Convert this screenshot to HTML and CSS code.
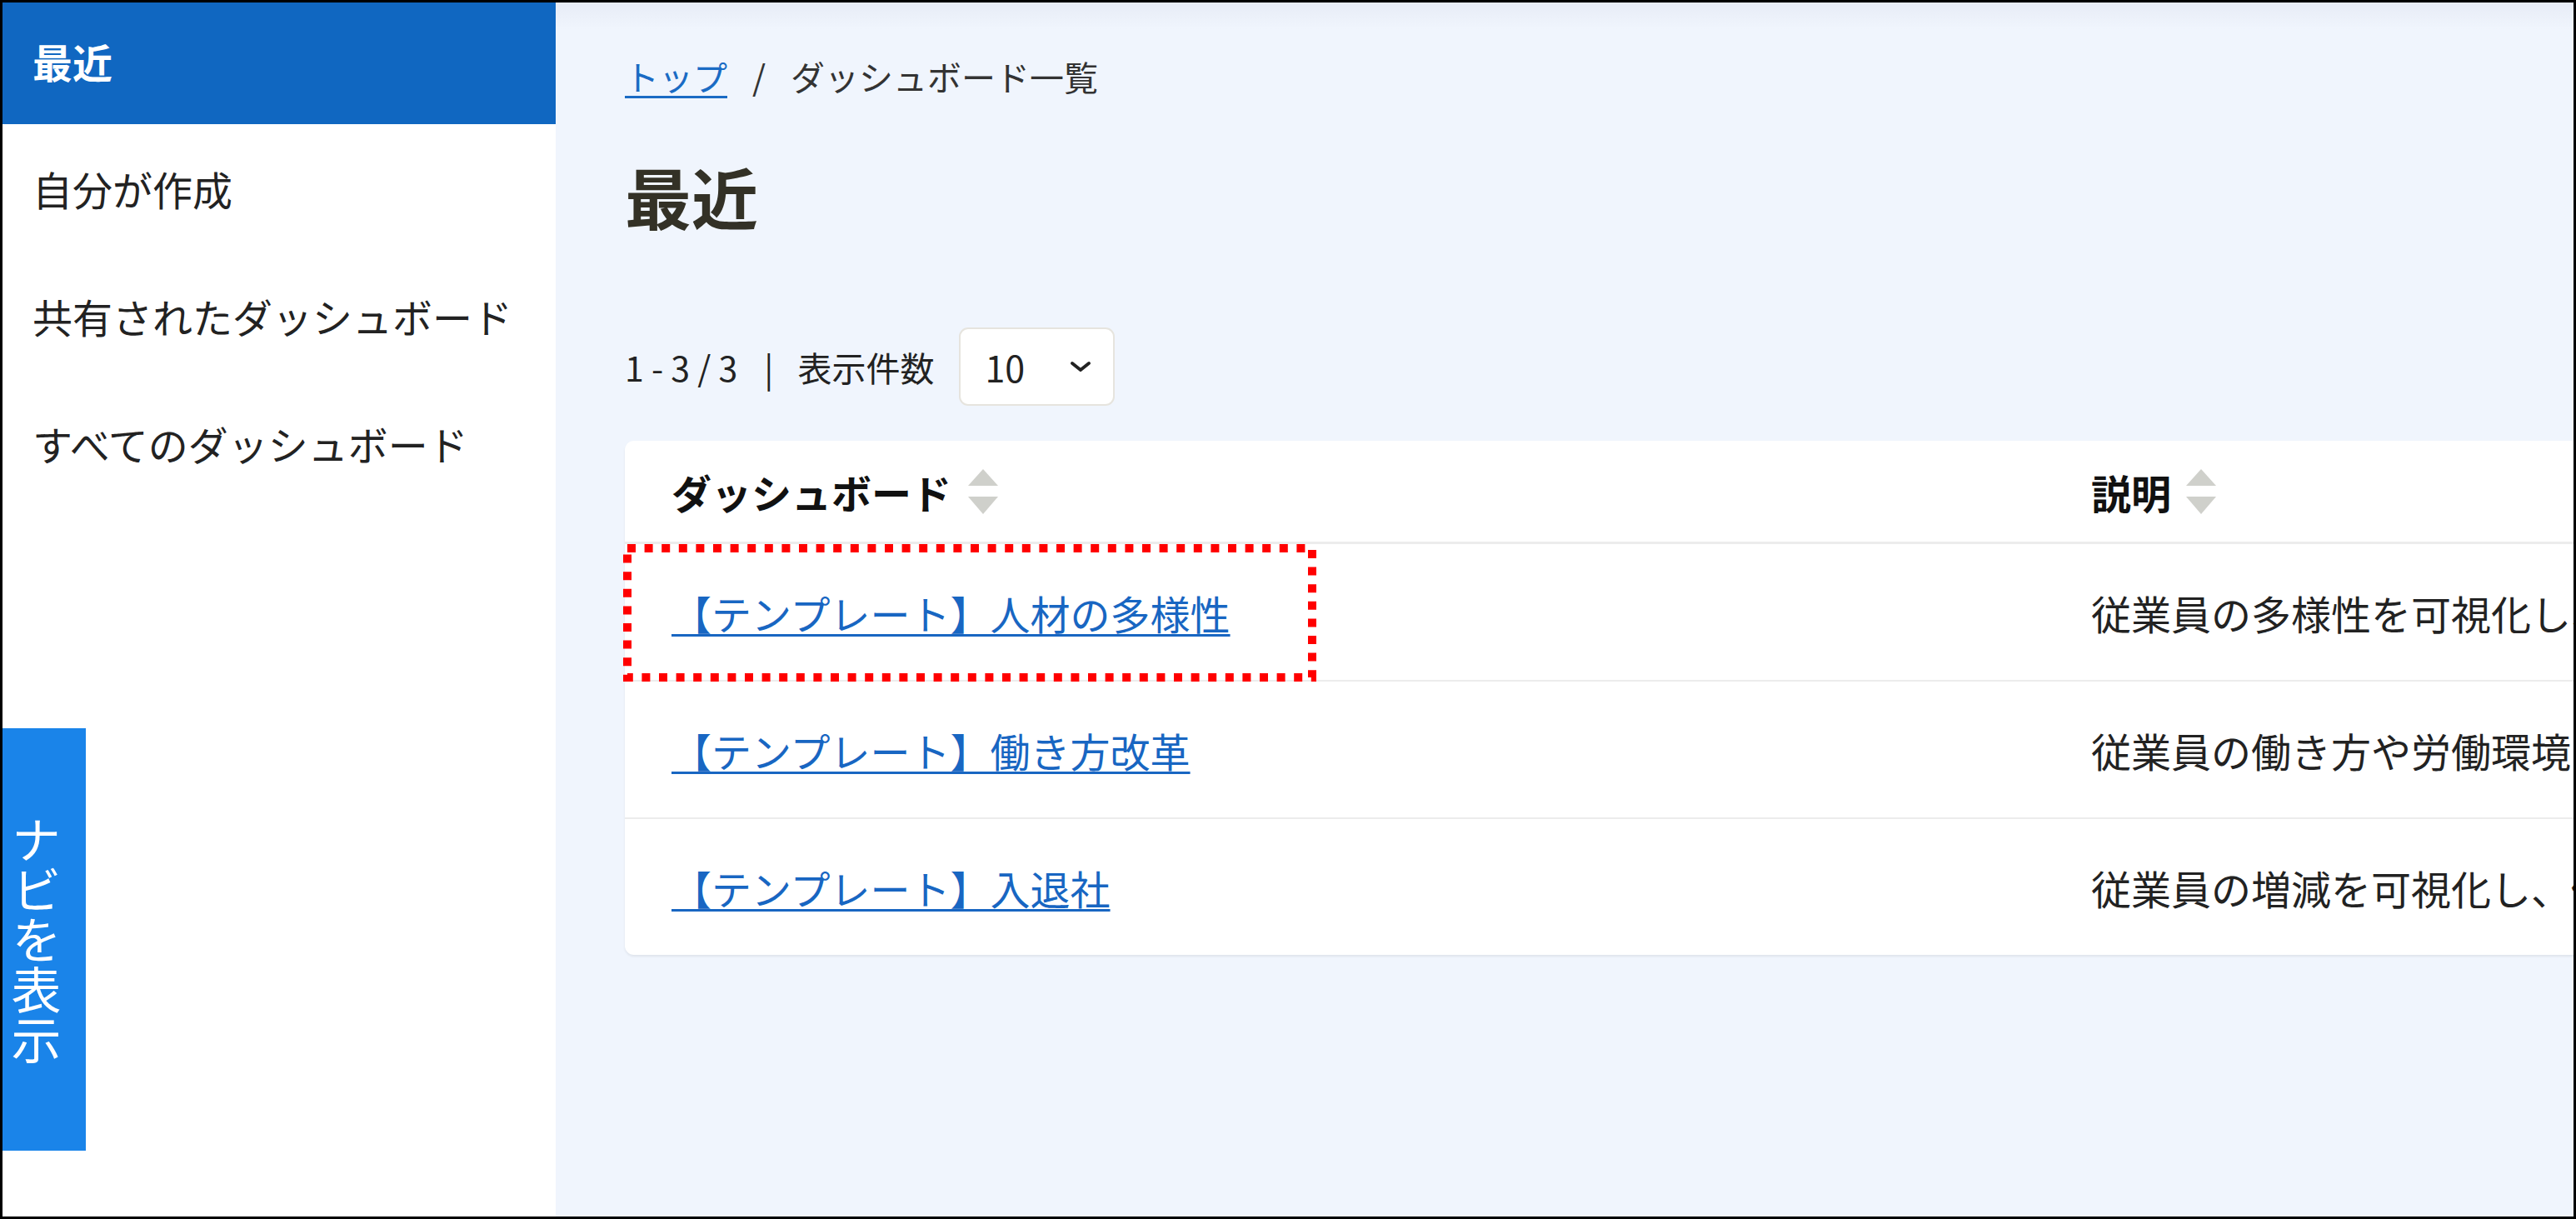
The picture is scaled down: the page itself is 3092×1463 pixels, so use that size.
FILE: index.html
```html
<!DOCTYPE html>
<html lang="ja">
<head>
<meta charset="utf-8">
<title>ダッシュボード一覧</title>
<link rel="stylesheet" href="styles.css">
</head>
<body>
<div class="frame">
  <aside class="sidebar">
    <ul class="nav">
      <li class="nav-item active">最近</li>
      <li class="nav-item">自分が作成</li>
      <li class="nav-item">共有されたダッシュボード</li>
      <li class="nav-item">すべてのダッシュボード</li>
    </ul>
  </aside>
  <button class="navi-toggle" type="button"><span class="navi-label">ナビを表示</span></button>
  <main class="main">
    <nav class="crumbs">
      <a class="crumb-link" href="#">トップ</a><span class="crumb-sep">/</span><span class="crumb-current">ダッシュボード一覧</span>
    </nav>
    <h1 class="title">最近</h1>
    <div class="count-row">
      <span class="count">1 - 3 / 3</span>
      <span class="count-sep">|</span>
      <span class="count-label">表示件数</span>
      <div class="select">
        <span class="select-value">10</span>
        <svg class="chevron" width="26" height="14" viewBox="0 0 26 14"><polyline points="3,3 13,11 23,3" fill="none" stroke="#222" stroke-width="4" stroke-linecap="round" stroke-linejoin="round"/></svg>
      </div>
    </div>
    <section class="card">
      <div class="row head">
        <div class="cell">ダッシュボード<svg class="sort" width="36" height="54" viewBox="0 0 36 54"><polygon points="18,0 36,20 0,20" fill="#cfd0cb"/><polygon points="0,33 36,33 18,54" fill="#cfd0cb"/></svg></div>
        <div class="cell">説明<svg class="sort" width="36" height="54" viewBox="0 0 36 54"><polygon points="18,0 36,20 0,20" fill="#cfd0cb"/><polygon points="0,33 36,33 18,54" fill="#cfd0cb"/></svg></div>
      </div>
      <div class="row">
        <div class="cell marked">
          <a class="dash-link" href="#">【テンプレート】人材の多様性</a>
          <svg class="mark" width="832" height="165" viewBox="0 0 832 165"><rect x="5" y="5" width="822" height="155" fill="none" stroke="#ff0000" stroke-width="10" stroke-dasharray="10 10.6"/></svg>
        </div>
        <div class="cell desc">従業員の多様性を可視化し、人材戦略の検討に活用します。</div>
      </div>
      <div class="row">
        <div class="cell"><a class="dash-link" href="#">【テンプレート】働き方改革</a></div>
        <div class="cell desc">従業員の働き方や労働環境を可視化し、改善に活用します。</div>
      </div>
      <div class="row">
        <div class="cell"><a class="dash-link" href="#">【テンプレート】入退社</a></div>
        <div class="cell desc">従業員の増減を可視化し、傾向を把握します。</div>
      </div>
    </section>
  </main>
</div>
</body>
</html>
```
FILE: styles.css
```css
* { box-sizing: border-box; }
html, body { margin: 0; padding: 0; height: 100%; }
body {
  font-family: "Noto Sans CJK JP", "Noto Sans", sans-serif;
  color: #222;
  background: #fff;
  overflow: hidden;
}
.frame {
  position: relative;
  width: 100vw;
  height: 100vh;
  border: 3px solid #000;
  display: flex;
  overflow: hidden;
}
.sidebar {
  width: 664px;
  flex: none;
  background: #fff;
}
.nav {
  list-style: none;
  margin: -7px 0 0 0;
  padding: 0;
}
.nav-item {
  height: 153px;
  display: flex;
  align-items: center;
  padding-left: 36px;
  font-size: 48px;
  line-height: 1;
  color: #222;
}
.nav-item.active {
  background: #1067c1;
  color: #fff;
  font-weight: 700;
}
.navi-toggle {
  position: absolute;
  left: 0;
  top: 871px;
  width: 100px;
  height: 507px;
  margin: 0;
  padding: 0 0 0 10px;
  border: none;
  background: #1a84e9;
  display: flex;
  align-items: center;
  justify-content: flex-start;
  font-family: inherit;
}
.navi-label {
  writing-mode: vertical-rl;
  font-size: 60px;
  line-height: 1;
  color: #fff;
  font-weight: 400;
}
.main {
  flex: 1;
  min-width: 0;
  overflow: hidden;
  background: linear-gradient(to bottom, #e7ecf6 0, #f0f5fd 32px);
  padding: 58px 0 0 83px;
}
.crumbs {
  height: 60px;
  display: flex;
  align-items: center;
  font-size: 41px;
  line-height: 1;
  color: #333;
}
.crumb-link {
  color: #1a6bc4;
  text-decoration: underline;
  text-decoration-thickness: 3px;
  text-underline-offset: 6px;
}
.crumb-sep { margin: 0 30px; }
.title {
  margin: 63px 0 0 0;
  height: 100px;
  font-size: 80px;
  line-height: 100px;
  font-weight: 700;
  color: #333126;
}
.count-row {
  margin-top: 109px;
  height: 94px;
  display: flex;
  align-items: center;
  font-size: 41px;
  line-height: 1;
  color: #222;
}
.count-sep { margin: 0 29px 0 32px; }
.select {
  margin-left: 30px;
  width: 187px;
  height: 94px;
  border: 2px solid #e6e4de;
  border-radius: 11px;
  background: #fff;
  display: flex;
  align-items: center;
  padding-left: 29px;
}
.select-value { font-size: 43px; }
.chevron { margin-left: 54px; }
.card {
  margin-top: 42px;
  width: 2700px;
  background: #fff;
  border-radius: 11px;
  box-shadow: 0 2px 3px rgba(0, 0, 0, 0.07);
}
.row {
  display: grid;
  grid-template-columns: 1760px 1fr;
  height: 165px;
  border-bottom: 2px solid #ececec;
}
.row:last-child { border-bottom: none; height: 163px; }
.row.head {
  height: 124px;
  border-bottom: 3px solid #ececec;
  font-weight: 700;
  color: #111;
}
.cell {
  display: flex;
  align-items: center;
  font-size: 48px;
  line-height: 1;
  white-space: nowrap;
  padding-left: 56px;
}
.cell + .cell { padding-left: 0; }
.sort { margin-left: 20px; }
.cell + .cell .sort { margin-left: 18px; }
.dash-link {
  color: #1866c2;
  text-decoration: underline;
  text-decoration-thickness: 3px;
  text-underline-offset: 5px;
}
.desc { color: #222; }
.marked { position: relative; }
.mark {
  position: absolute;
  left: -2px;
  top: 0;
}
```
